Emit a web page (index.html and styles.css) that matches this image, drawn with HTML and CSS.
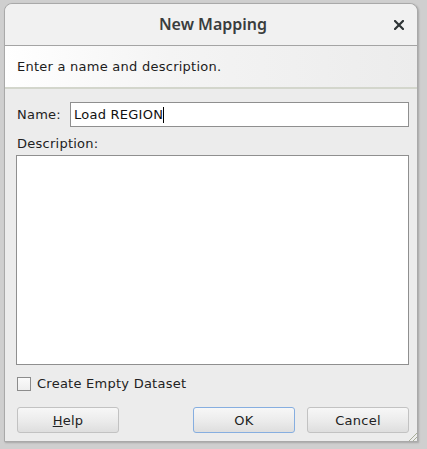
FILE: index.html
```html
<!DOCTYPE html>
<html>
<head>
<meta charset="utf-8">
<link rel="stylesheet" href="styles.css">
</head>
<body>
<div class="dialog">
  <div class="titlebar">
    <span class="title">New Mapping</span>
    <svg class="close" width="10" height="10" viewBox="0 0 10 10"><path d="M1 1 L9 9 M9 1 L1 9" stroke="#2e3436" stroke-width="2.2" stroke-linecap="square"/></svg>
  </div>
  <div class="header">Enter a name and description.</div>
  <div class="body">
    <div class="row">
      <label class="lbl">Name:</label>
      <div class="input">Load REGION<span class="caret"></span></div>
    </div>
    <div class="desc-label">Description:</div>
    <div class="textarea"></div>
    <div class="check-row">
      <span class="checkbox"></span>
      <span>Create Empty Dataset</span>
    </div>
    <div class="buttons">
      <button class="btn"><u>H</u>elp</button>
      <div class="spacer"></div>
      <button class="btn focused">OK</button>
      <button class="btn">Cancel</button>
    </div>
  </div>
  <div class="grip"></div>
</div>
</body>
</html>
```
FILE: styles.css
```css
html, body { margin: 0; padding: 0; }
body {
  width: 427px; height: 449px;
  background: #cfcfcf;
  font-family: "DejaVu Sans", sans-serif;
  font-size: 13px;
  letter-spacing: 0.25px;
  color: #1a1a1a;
  overflow: hidden;
  padding: 3px 9px 0 4px;
  box-sizing: border-box;
}
.dialog {
  position: relative;
  width: 414px;
  height: 439px;
  background: #ececec;
  border: 1px solid #a9a9a9;
  border-radius: 8px 8px 0 0;
  box-sizing: border-box;
  display: flex;
  flex-direction: column;
  box-shadow: 1px 1px 2px rgba(0,0,0,0.2);
}
.titlebar {
  height: 41px;
  background: #f1f1f1;
  border-radius: 8px 8px 0 0;
  border-bottom: 1px solid #a4a4a4;
  display: flex;
  align-items: center;
  justify-content: center;
  position: relative;
}
.title {
  font-family: "Noto Sans", sans-serif;
  font-size: 16px;
  font-weight: 600;
  letter-spacing: 0;
  color: #3a3d3d;
  margin-top: -1px;
  margin-left: 4px;
}
.close {
  position: absolute;
  right: 13px;
  top: 16px;
}
.header {
  background: linear-gradient(to right, #ffffff 0%, #f4f4f4 40%, #ececec 100%);
  border-bottom: 2px solid #d3d6cc;
  display: flex;
  align-items: center;
  padding-left: 12px;
  box-sizing: border-box;
  height: 43px;
  color: #1c1c1c;
}
.body {
  flex: 1;
  padding: 13px 8px 0 12px;
  display: flex;
  flex-direction: column;
}
.row {
  display: flex;
  align-items: center;
  gap: 9px;
}
.lbl { color: #222; }
.input {
  flex: 1;
  height: 25px;
  background: #fff;
  border: 1px solid #8f8f8f;
  box-sizing: border-box;
  display: flex;
  align-items: center;
  padding-left: 3px;
  color: #111;
}
.caret {
  display: inline-block;
  width: 1px;
  height: 16px;
  background: #000;
}
.desc-label {
  margin-top: 9px;
  color: #222;
}
.textarea {
  margin-top: 4px;
  height: 210px;
  background: #fff;
  border: 1px solid #8f8f8f;
  box-sizing: border-box;
  margin-left: -1px;
}
.check-row {
  margin-top: 11px;
  display: flex;
  align-items: center;
  gap: 6px;
  color: #222;
}
.checkbox {
  width: 14px; height: 14px;
  box-sizing: border-box;
  border: 1px solid #8c8c8c;
  background: linear-gradient(#fafafa, #eeeeee);
}
.buttons {
  margin-top: 16px;
  display: flex;
  gap: 12px;
}
.spacer { flex: 1; }
.btn {
  width: 102px;
  height: 26px;
  font-family: "DejaVu Sans", sans-serif;
  font-size: 13px;
  letter-spacing: 0.25px;
  color: #222;
  border: 1px solid #c2c2c2;
  border-radius: 3px;
  background: linear-gradient(#f7f7f7, #ebebeb 55%, #dedede);
  padding: 0;
}
.btn.focused {
  border-color: #86aee0;
}
.grip {
  position: absolute;
  right: 0; bottom: 0;
  width: 10px; height: 10px;
  background: repeating-linear-gradient(135deg, transparent 0 2px, #a8ae98 2px 3px);
  clip-path: polygon(100% 0, 100% 100%, 0 100%);
}
```
